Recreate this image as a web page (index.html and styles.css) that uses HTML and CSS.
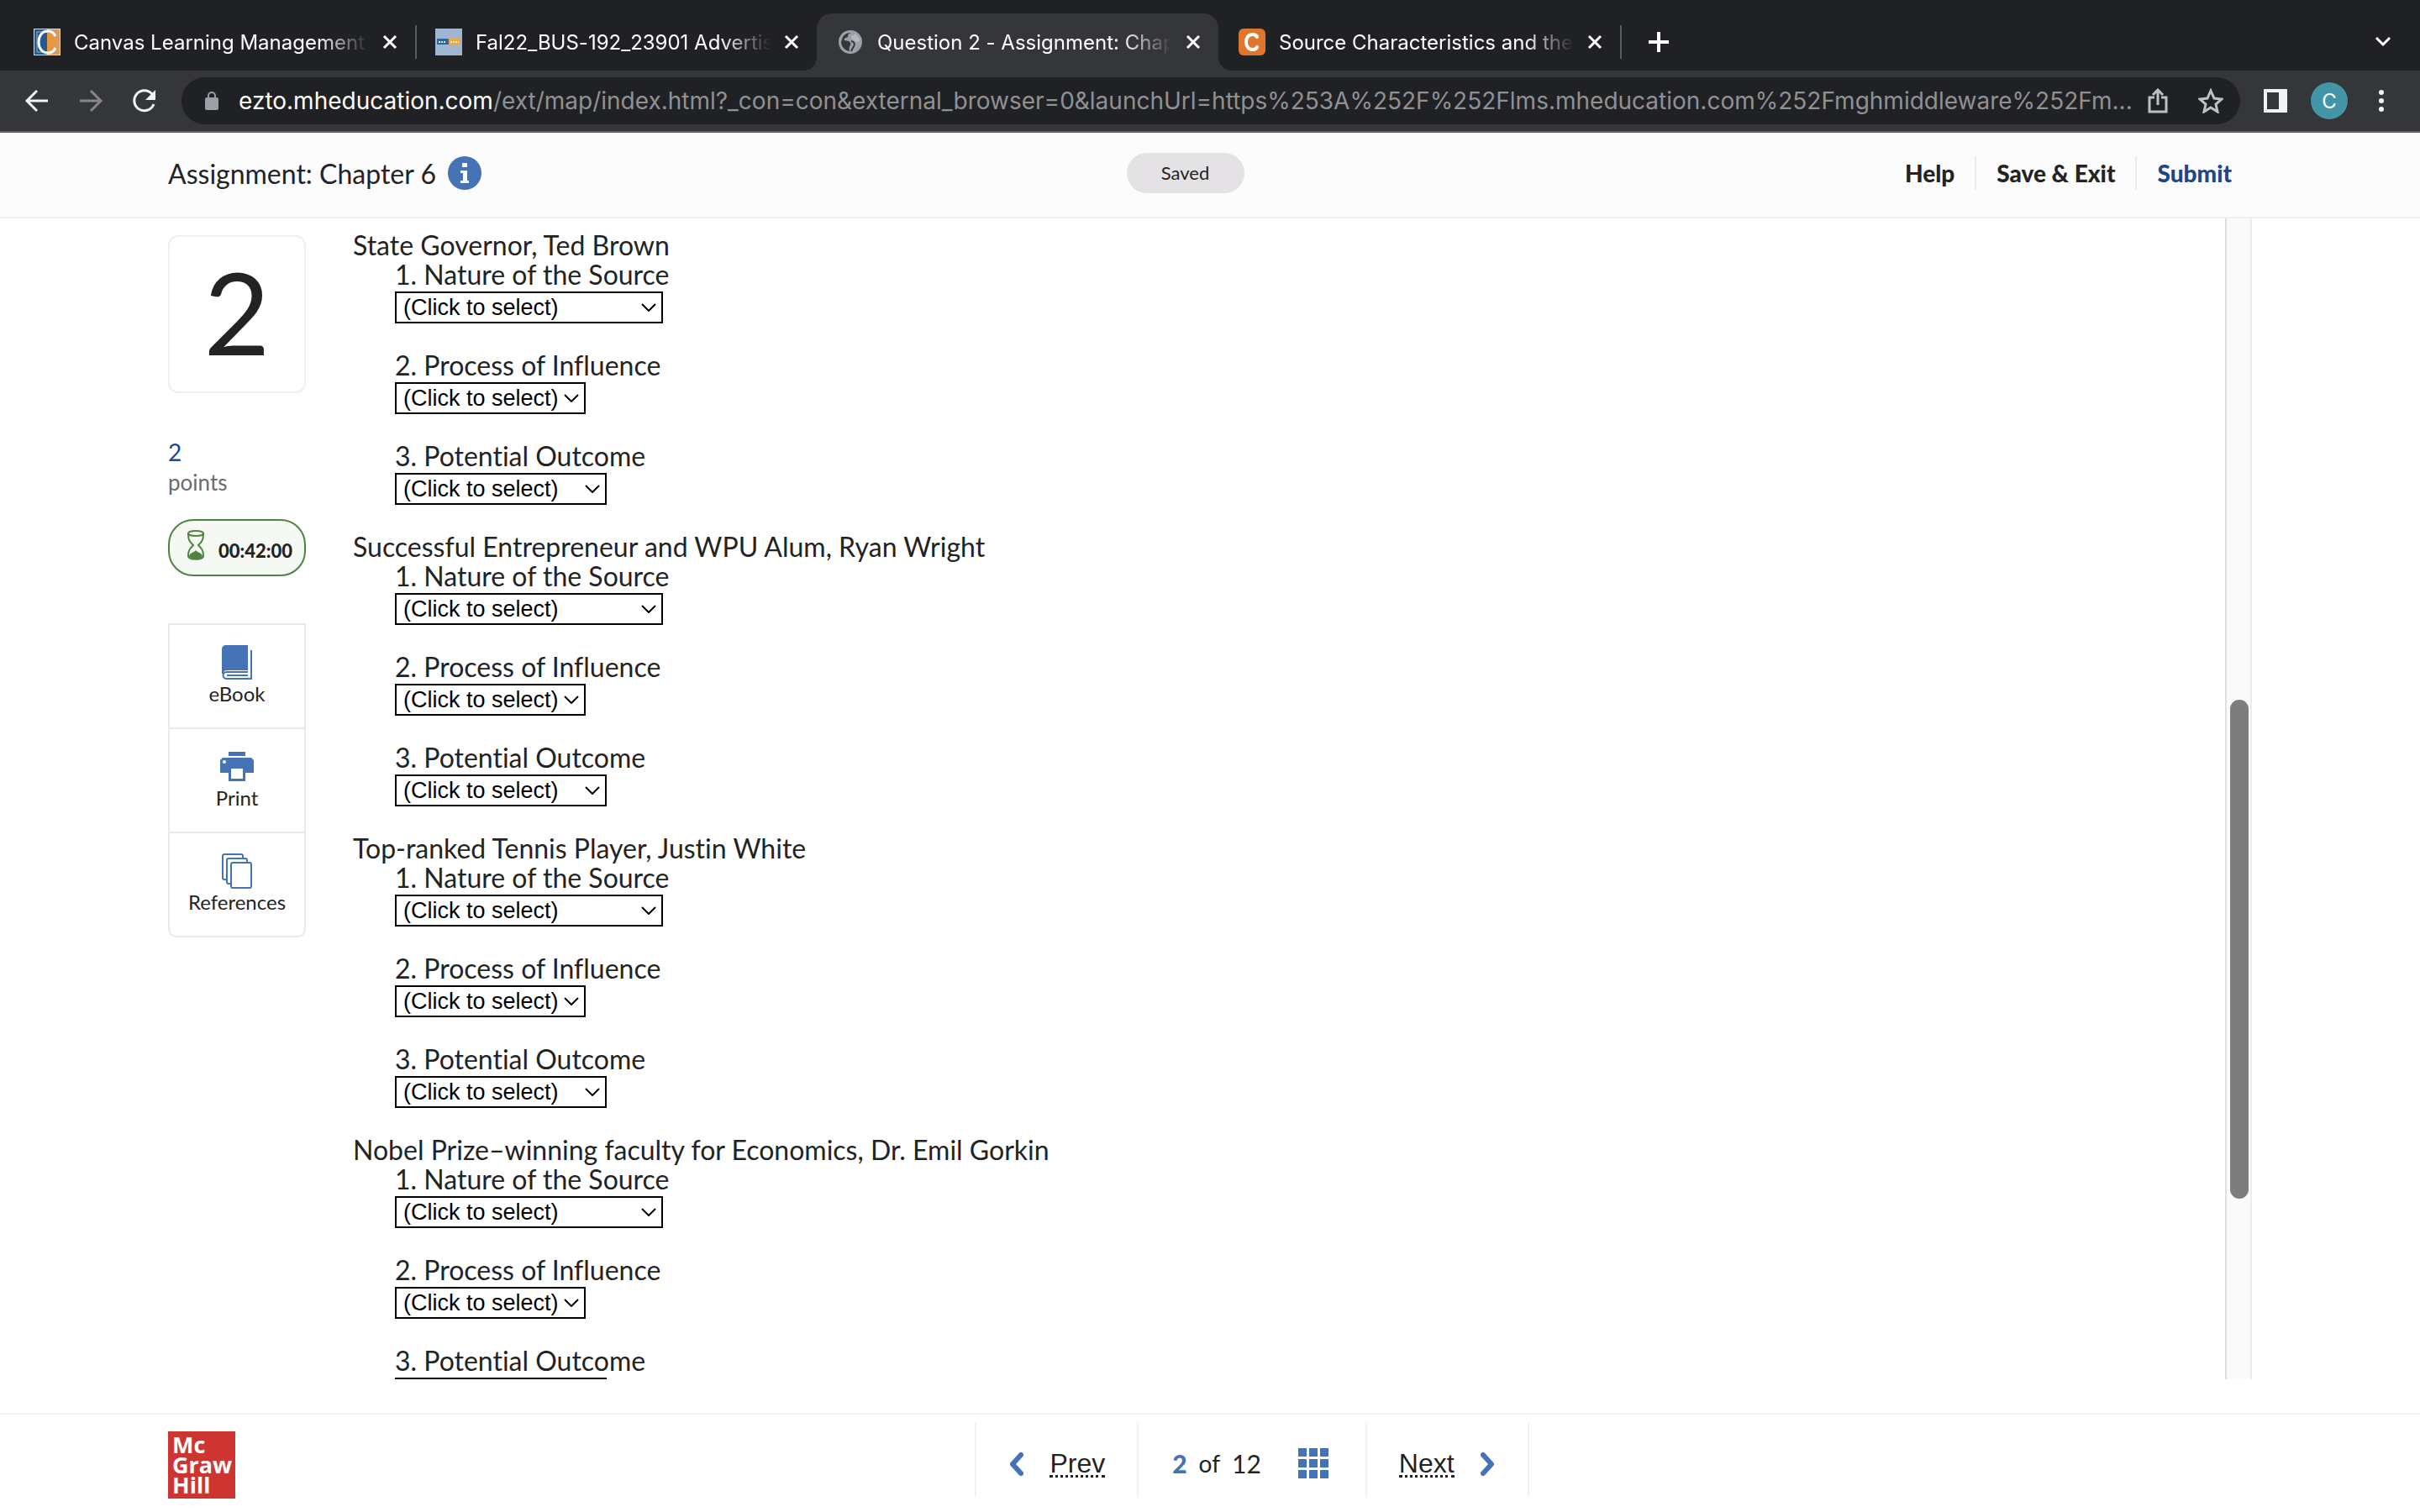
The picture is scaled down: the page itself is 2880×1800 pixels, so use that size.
FILE: index.html
```html
<!DOCTYPE html>
<html lang="en">

<head>
    <meta charset="UTF-8">
    <meta name="viewport" content="width=device-width, initial-scale=1.0">
    <title>Question 2 - Assignment: Chapter 6</title>
    <link rel="stylesheet" href="styles.css">
</head>

<body>
    <!-- shared icons -->
    <svg class="defs" aria-hidden="true">
        <symbol id="arrow-down" viewBox="0 0 18 10">
            <path d="M1 1l8 8 8-8" fill="none" stroke="#000" stroke-width="2" />
        </symbol>
        <symbol id="close" viewBox="0 0 18 18">
            <path d="M2 2l14 14M16 2L2 16" fill="none" stroke="#fff" stroke-width="3" />
        </symbol>
    </svg>

    <div class="tabs">
        <div class="tab">
            <svg class="favicon" viewBox="0 0 32 32">
                <path fill="#cfdcec" d="M0 0h32v32H0z" />
                <path fill="#245a8d" d="M1 1h15v30H1z" />
                <path fill="#ea9540" d="M16 1h15v30H16z" />
                <path d="M4 4h24v24H4z" fill="none" stroke="#8fb0cf" stroke-width="1" />
                <path d="M26 9C24 5 21 3 17 3 10 3 6 9 6 16s4 13 11 13c4 0 7-2 9-6" fill="none" stroke="#fff" stroke-width="3" />
            </svg>
            <span class="tab-title">Canvas Learning Management System</span>
            <button class="tab-close" aria-label="Close tab"><svg><use href="#close" /></svg></button>
        </div>
        <div class="tab divided">
            <svg class="favicon" viewBox="0 0 32 32">
                <path fill="#a0b5d2" d="M0 0h32v32H0z" />
                <path fill="#2d659e" d="M2 12h14v7H2z" />
                <path fill="#f2a73f" d="M16 12h14v7H16z" />
                <path d="M4 16h9M18 16h10" stroke="#dfe6ee" stroke-width="2" stroke-dasharray="2 1" />
            </svg>
            <span class="tab-title">Fal22_BUS-192_23901 Advertising</span>
            <button class="tab-close" aria-label="Close tab"><svg><use href="#close" /></svg></button>
        </div>
        <div class="tab active">
            <svg class="favicon" viewBox="0 0 32 32">
                <circle cx="16" cy="16" r="14" fill="#9aa0a6" />
                <path d="M17 5c-4 1-4 3-4 5-3 1-5 2-4 4l5 1c2 1 3 3 2 5-1 1-2 3-1 7-6-1-10-6-10-11l1-3C7 8 11 5 17 5z" fill="#35363a" />
                <path d="M21 6c4 2 6 6 6 9-3 2-6 1-7-1-1-1-3-2-3-4 1-2 4-2 4-4z" fill="#b3b7bb" />
                <path d="M17 15c2 0 4 2 4 4-1 3-3 5-4 8" fill="none" stroke="#35363a" stroke-width="2" />
            </svg>
            <span class="tab-title">Question 2 - Assignment: Chapter 6</span>
            <button class="tab-close" aria-label="Close tab"><svg><use href="#close" /></svg></button>
        </div>
        <div class="tab">
            <svg class="favicon" viewBox="0 0 32 32">
                <rect width="32" height="32" rx="6" fill="#de762b" />
                <path d="M22 10c-1-2-3-3-5-3-5 0-8 4-8 9s3 9 8 9c2 0 4-1 5-3" fill="none" stroke="#fff" stroke-width="4" stroke-linecap="round" />
            </svg>
            <span class="tab-title">Source Characteristics and the Processing</span>
            <button class="tab-close" aria-label="Close tab"><svg><use href="#close" /></svg></button>
        </div>
        <button class="new-tab" aria-label="New tab">
            <svg width="26" height="26" viewBox="0 0 26 26"><path d="M13 1v24M1 13h24" stroke="#fff" stroke-width="4" /></svg>
        </button>
        <button class="tab-search" aria-label="Search tabs">
            <svg width="20" height="14" viewBox="0 0 20 14"><path d="M2 2l8 8 8-8" fill="none" stroke="#fff" stroke-width="3" /></svg>
        </button>
    </div>

    <div class="toolbar">
        <div class="history">
            <button aria-label="Back"><svg width="32" height="32" viewBox="0 0 32 32"><path d="M29 16H4M16 4L4 16l12 12" fill="none" stroke="#f1f3f4" stroke-width="3" /></svg></button>
            <button aria-label="Forward"><svg width="32" height="32" viewBox="0 0 32 32"><path d="M3 16h25M16 4l12 12-12 12" fill="none" stroke="#858688" stroke-width="3" /></svg></button>
            <button aria-label="Reload"><svg width="32" height="32" viewBox="0 0 32 32"><path d="M27 20a12 12 0 1 1-2-12l3 4" fill="none" stroke="#f1f3f4" stroke-width="3" /><path d="M29 3v12H17z" fill="#f1f3f4" /></svg></button>
        </div>
        <div class="address">
            <svg width="16" height="22" viewBox="0 0 16 22"><rect y="7" width="16" height="15" rx="2" fill="#9aa0a6" /><path d="M4 8V5a4 4 0 0 1 8 0v3" fill="none" stroke="#9aa0a6" stroke-width="2" /></svg>
            <label for="url">ezto.mheducation.com</label>
            <input type="text" id="url" value="/ext/map/index.html?_con=con&amp;external_browser=0&amp;launchUrl=https%253A%252F%252Flms.mheducation.com%252Fmghmiddleware%252Fm...">
            <button aria-label="Share"><svg width="24" height="30" viewBox="0 0 24 30"><path d="M8 11H2v17h20V11h-6M12 20V3M6 8l6-6 6 6" fill="none" stroke="#bdc1c6" stroke-width="3" /></svg></button>
            <button aria-label="Bookmark"><svg width="30" height="30" viewBox="0 0 30 30"><path d="M15 3l4 9 9 1-7 6 2 9-8-5-8 5 2-9-7-6 9-1z" fill="none" stroke="#bdc1c6" stroke-width="3" /></svg></button>
        </div>
        <button aria-label="Side panel"><svg width="28" height="28" viewBox="0 0 28 28"><path d="M0 0h28v28H0zM4 4v20h14V4z" fill="#f1f3f4" fill-rule="evenodd" /></svg></button>
        <button class="avatar">C</button>
        <button class="menu" aria-label="Menu"><svg width="8" height="28" viewBox="0 0 8 28"><g fill="#f1f3f4"><circle cx="4" cy="4" r="3" /><circle cx="4" cy="14" r="3" /><circle cx="4" cy="24" r="3" /></g></svg></button>
    </div>

    <header class="header">
        <div class="title">
            <h1>Assignment: Chapter 6</h1>
            <button aria-label="Info">
                <svg width="40" height="40" viewBox="0 0 40 40"><circle cx="20" cy="20" r="20" fill="#4673b5" /><path d="M17 8h6v5h-6zM15 17h8v12h2v3H15v-3h3v-9h-3z" fill="#fff" /></svg>
            </button>
        </div>
        <span class="saved">Saved</span>
        <nav class="actions">
            <button>Help</button>
            <button>Save &amp; Exit</button>
            <button class="submit">Submit</button>
        </nav>
    </header>

    <main class="main">
        <aside class="sidebar">
            <div class="number">2</div>
            <div class="points"><strong>2</strong>points</div>
            <div class="timer">
                <svg width="22" height="36" viewBox="0 0 22 36">
                    <path d="M2 3c0 10 2 11 6 15-4 4-6 6-6 13 0 5 18 5 18 0 0-7-2-9-6-13 4-4 6-5 6-15" fill="none" stroke="#4d8440" stroke-width="2" />
                    <ellipse cx="11" cy="4" rx="9" ry="3" fill="none" stroke="#4d8440" stroke-width="2" />
                    <path d="M11 24c2 3 8 3 8 8-2 3-14 3-16 0 0-5 6-5 8-8z" fill="#4d8440" />
                </svg>
                <span>00:42:00</span>
            </div>
            <div class="tools">
                <button>
                    <svg width="36" height="42" viewBox="0 0 36 42"><path d="M5 0h26v30H6c-3 0-4 2-4 4H0V5c0-3 2-5 5-5z" fill="#4673b5" /><path d="M35 6v34H6c-6 0-6-8 0-8h25M6 36h25" fill="none" stroke="#4673b5" stroke-width="2" /></svg>
                    eBook
                </button>
                <button>
                    <svg width="40" height="42" viewBox="0 0 40 42"><path d="M10 3h20v5H10zM3 10h34l3 3v15H30v10H10V28H0V13zM13 23v12h14V23z" fill="#4673b5" fill-rule="evenodd" /><circle cx="5" cy="15" r="2" fill="#fff" /></svg>
                    Print
                </button>
                <button>
                    <svg width="36" height="42" viewBox="0 0 36 42"><g fill="#fff" stroke="#4673b5" stroke-width="2"><rect x="1" y="1" width="24" height="30" rx="2" /><rect x="6" y="6" width="24" height="30" rx="2" /><rect x="11" y="11" width="24" height="30" rx="2" /></g></svg>
                    References
                </button>
            </div>
        </aside>

        <div class="content">
            <section class="source">
                <h2>State Governor, Ted Brown</h2>
                <div class="question">
                    <label for="nature1">1. Nature of the Source</label>
                    <div class="dropdown nature"><select id="nature1"><option>(Click to select)</option></select><svg><use href="#arrow-down" /></svg></div>
                </div>
                <div class="question">
                    <label for="process1">2. Process of Influence</label>
                    <div class="dropdown process"><select id="process1"><option>(Click to select)</option></select><svg><use href="#arrow-down" /></svg></div>
                </div>
                <div class="question">
                    <label for="outcome1">3. Potential Outcome</label>
                    <div class="dropdown outcome"><select id="outcome1"><option>(Click to select)</option></select><svg><use href="#arrow-down" /></svg></div>
                </div>
            </section>
            <section class="source">
                <h2>Successful Entrepreneur and WPU Alum, Ryan Wright</h2>
                <div class="question">
                    <label for="nature2">1. Nature of the Source</label>
                    <div class="dropdown nature"><select id="nature2"><option>(Click to select)</option></select><svg><use href="#arrow-down" /></svg></div>
                </div>
                <div class="question">
                    <label for="process2">2. Process of Influence</label>
                    <div class="dropdown process"><select id="process2"><option>(Click to select)</option></select><svg><use href="#arrow-down" /></svg></div>
                </div>
                <div class="question">
                    <label for="outcome2">3. Potential Outcome</label>
                    <div class="dropdown outcome"><select id="outcome2"><option>(Click to select)</option></select><svg><use href="#arrow-down" /></svg></div>
                </div>
            </section>
            <section class="source">
                <h2>Top-ranked Tennis Player, Justin White</h2>
                <div class="question">
                    <label for="nature3">1. Nature of the Source</label>
                    <div class="dropdown nature"><select id="nature3"><option>(Click to select)</option></select><svg><use href="#arrow-down" /></svg></div>
                </div>
                <div class="question">
                    <label for="process3">2. Process of Influence</label>
                    <div class="dropdown process"><select id="process3"><option>(Click to select)</option></select><svg><use href="#arrow-down" /></svg></div>
                </div>
                <div class="question">
                    <label for="outcome3">3. Potential Outcome</label>
                    <div class="dropdown outcome"><select id="outcome3"><option>(Click to select)</option></select><svg><use href="#arrow-down" /></svg></div>
                </div>
            </section>
            <section class="source">
                <h2>Nobel Prize–winning faculty for Economics, Dr. Emil Gorkin</h2>
                <div class="question">
                    <label for="nature4">1. Nature of the Source</label>
                    <div class="dropdown nature"><select id="nature4"><option>(Click to select)</option></select><svg><use href="#arrow-down" /></svg></div>
                </div>
                <div class="question">
                    <label for="process4">2. Process of Influence</label>
                    <div class="dropdown process"><select id="process4"><option>(Click to select)</option></select><svg><use href="#arrow-down" /></svg></div>
                </div>
                <div class="question">
                    <label for="outcome4">3. Potential Outcome</label>
                    <div class="dropdown outcome"><select id="outcome4"><option>(Click to select)</option></select><svg><use href="#arrow-down" /></svg></div>
                </div>
            </section>
        </div>
        <div class="scrollbar"><div class="thumb"></div></div>
    </main>

    <footer class="footer">
        <div class="logo">Mc<br>Graw<br>Hill</div>
        <nav class="pager">
            <a class="step" href="#">
                <svg width="20" height="30" viewBox="0 0 20 30"><path d="M15 4L5 15l10 11" fill="none" stroke="#4673b5" stroke-width="6" stroke-linecap="round" stroke-linejoin="round" /></svg>
                <span>Prev</span>
            </a>
            <div class="position">
                <strong>2</strong><span class="of">of</span><span>12</span>
                <button aria-label="All questions">
                    <svg width="36" height="36" viewBox="0 0 36 36"><path d="M0 0h10v10H0zM13 0h10v10H13zM26 0h10v10H26zM0 13h10v10H0zM13 13h10v10H13zM26 13h10v10H26zM0 26h10v10H0zM13 26h10v10H13zM26 26h10v10H26z" fill="#4673b5" /></svg>
                </button>
            </div>
            <a class="step" href="#">
                <span>Next</span>
                <svg width="20" height="30" viewBox="0 0 20 30"><path d="M5 4l10 11L5 26" fill="none" stroke="#4673b5" stroke-width="6" stroke-linecap="round" stroke-linejoin="round" /></svg>
            </a>
        </nav>
    </footer>
</body>

</html>
```
FILE: styles.css
```css
* {
    box-sizing: border-box;
}

body {
    margin: 0;
    height: 100vh;
    display: flex;
    flex-direction: column;
    overflow: hidden;
    background: #fff;
    color: #232323;
    font-family: Lato, sans-serif;
    font-size: 32px;
    font-variant-ligatures: none;
}

button {
    padding: 0;
    border: 0;
    background: none;
    color: inherit;
    font-family: inherit;
}

svg {
    display: block;
    flex: none;
}

h1,
h2 {
    margin: 0;
    font-size: inherit;
    font-weight: normal;
}

.defs {
    display: none;
}

/* browser tabs */
.tabs {
    display: flex;
    align-items: flex-end;
    height: 84px;
    padding-left: 16px;
    background: #202124;
    color: #fff;
    font-family: Inter, sans-serif;
    font-size: 24px;
}

.tab {
    position: relative;
    display: flex;
    align-items: center;
    width: 478px;
    height: 68px;
    padding: 0 21px 0 24px;
}

.favicon {
    width: 32px;
    height: 32px;
}

.tab-title {
    flex: 1;
    margin: 0 16px;
    overflow: hidden;
    white-space: nowrap;
    mask-image: linear-gradient(to left, transparent, #000 60px);
}

.tab-close svg {
    width: 18px;
    height: 18px;
}

.tab.divided {
    z-index: 1;
}

.tab.divided::before,
.new-tab::before {
    content: "";
    position: absolute;
    left: 0;
    top: 14px;
    width: 2px;
    height: 40px;
    background: #5b5c5f;
}

.tab.active {
    border-radius: 18px 18px 0 0;
    background: #35363a;
}

/* curved feet of the open tab */
.tab.active::before,
.tab.active::after {
    content: "";
    position: absolute;
    bottom: 0;
    left: -16px;
    width: 16px;
    height: 16px;
    background: radial-gradient(circle at 0 0, transparent 16px, #35363a 16px);
}

.tab.active::after {
    left: 100%;
    background: radial-gradient(circle at 100% 0, transparent 16px, #35363a 16px);
}

.new-tab {
    position: relative;
    height: 68px;
    padding-left: 33px;
}

.tab-search {
    height: 68px;
    margin-left: auto;
    padding-right: 34px;
}

/* toolbar */
.toolbar {
    display: flex;
    align-items: center;
    gap: 28px;
    height: 74px;
    padding: 0 42px 0 28px;
    border-bottom: 2px solid #606165;
    background: #35363a;
    font-family: Inter, sans-serif;
}

.history {
    display: flex;
    gap: 32px;
}

.address {
    display: flex;
    align-items: center;
    flex: 1;
    height: 56px;
    padding: 0 20px 0 28px;
    border-radius: 28px;
    background: #202124;
    color: #fff;
    font-size: 28px;
}

.address label {
    margin-left: 24px;
}

.address input {
    flex: 1;
    min-width: 0;
    padding: 0;
    border: 0;
    background: none;
    color: #8f9194;
    font: inherit;
}

.address button {
    margin-left: 36px;
}

.address input + button {
    margin-left: 10px;
}

.avatar {
    width: 44px;
    height: 44px;
    border-radius: 50%;
    background: #4195a6;
    color: #fff;
    font-size: 24px;
}

.menu {
    margin-left: 8px;
}

/* assignment header */
.header {
    display: grid;
    grid-template-columns: 1fr auto 1fr;
    align-items: center;
    height: 102px;
    padding: 0 200px 4px;
    border-bottom: 2px solid #efefef;
    background: #fcfcfc;
}

.title {
    display: flex;
    align-items: center;
    gap: 14px;
}

.saved {
    width: 140px;
    margin-left: -59px;
    border-radius: 24px;
    background: #e4e2e4;
    font-size: 22px;
    line-height: 48px;
    text-align: center;
}

.actions {
    display: flex;
    justify-content: flex-end;
}

.actions button {
    height: 40px;
    padding: 0 24px;
    font-size: 28px;
    font-weight: 900;
}

.actions button + button {
    border-left: 2px solid #ebebeb;
}

.actions .submit {
    color: #1f468d;
}

/* question area */
.main {
    display: flex;
    flex: 1;
    gap: 56px;
    min-height: 0;
    padding: 0 200px 40px;
}

.sidebar {
    width: 164px;
    padding-top: 20px;
}

.number {
    height: 188px;
    border: 2px solid #efefef;
    border-radius: 12px;
    font-size: 136px;
    line-height: 178px;
    text-align: center;
}

.points {
    margin: 52px 0 26px;
    color: #6b6b6b;
    font-size: 26px;
    line-height: 36px;
}

.points strong {
    display: block;
    color: #1f468d;
    font-size: 28px;
    font-weight: normal;
}

.timer {
    display: flex;
    align-items: center;
    gap: 16px;
    height: 68px;
    padding: 6px 8px 0 20px;
    border: 2px solid #4d8440;
    border-radius: 30px;
    background: #f6f8f4;
    font-size: 22px;
    font-weight: 900;
}

.timer svg {
    margin-bottom: 12px;
}

.tools {
    margin-top: 56px;
    border: 2px solid #e9e9e9;
    border-radius: 0 0 10px 10px;
}

.tools button {
    display: flex;
    flex-direction: column;
    align-items: center;
    gap: 2px;
    width: 100%;
    padding: 24px 0 26px;
    font-size: 24px;
    line-height: 28px;
}

.tools button + button {
    border-top: 2px solid #e9e9e9;
}

.content {
    flex: 1;
    padding-top: 14px;
    overflow: hidden;
    line-height: 35px;
}

.question {
    display: flex;
    flex-direction: column;
    align-items: flex-start;
    gap: 3px;
    padding: 0 0 32px 50px;
}

.dropdown {
    position: relative;
}

.dropdown select {
    display: block;
    width: 100%;
    height: 38px;
    padding: 0 8px;
    border: 2px solid #000;
    border-radius: 0;
    appearance: none;
    background: #fff;
    color: #000;
    font-family: "Liberation Sans", sans-serif;
    font-size: 27px;
}

.dropdown svg {
    position: absolute;
    right: 8px;
    top: 14px;
    width: 18px;
    height: 10px;
    pointer-events: none;
}

.nature {
    width: 319px;
}

.process {
    width: 227px;
}

.outcome {
    width: 252px;
}

.scrollbar {
    width: 32px;
    padding: 573px 2px 0 4px;
    border: solid #dedede;
    border-width: 0 2px;
    border-right-color: #ececec;
    background: #fafafa;
}

.thumb {
    height: 594px;
    border-radius: 11px;
    background: #7d7d7d;
}

/* footer */
.footer {
    display: grid;
    grid-template-columns: 1fr auto 1fr;
    height: 118px;
    padding: 0 200px;
    border-top: 2px solid #f2f2f2;
}

.logo {
    width: 80px;
    height: 80px;
    margin-top: 20px;
    padding: 4px 5px;
    background: #cf3530;
    color: #fff;
    font-family: "Open Sans", sans-serif;
    font-size: 27px;
    font-weight: bold;
    line-height: 24px;
}

.pager {
    display: flex;
    height: 88px;
    margin: 10px 0 0 100px;
    border-right: 2px solid #f2f2f2;
}

.step,
.position {
    display: flex;
    align-items: center;
    padding: 10px 38px 0;
    border-left: 2px solid #f2f2f2;
}

.step {
    gap: 29px;
    color: #232323;
    font-family: "Liberation Sans", sans-serif;
    font-size: 32px;
    text-decoration: none;
}

.step span {
    border-bottom: 3px dotted #232323;
    line-height: 28px;
}

.position {
    gap: 14px;
    padding: 8px 44px 0 40px;
    font-size: 30px;
}

.position strong {
    color: #4673b5;
    font-weight: 900;
}

.position .of {
    font-size: 28px;
}

.position button {
    margin-left: 30px;
}
```
